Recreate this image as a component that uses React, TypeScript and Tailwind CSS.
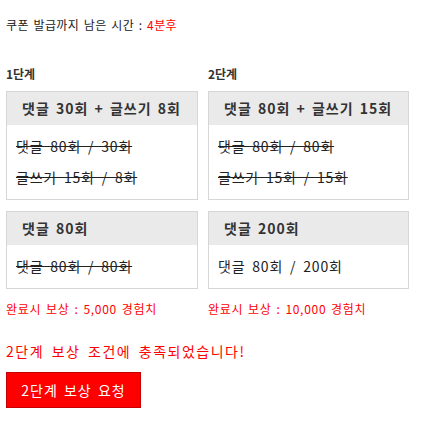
const font = { fontFamily: '"Noto Sans CJK KR", "Noto Sans", sans-serif' }

type Mission = {
  title: string
  lines: { text: string; done: boolean }[]
}

type Step = {
  label: string
  width: string
  missions: Mission[]
  reward: string
}

const steps: Step[] = [
  {
    label: '1단계',
    width: 'w-[192px]',
    missions: [
      {
        title: '댓글 30회 + 글쓰기 8회',
        lines: [
          { text: '댓글 80회 / 30회', done: true },
          { text: '글쓰기 15회 / 8회', done: true },
        ],
      },
      {
        title: '댓글 80회',
        lines: [{ text: '댓글 80회 / 80회', done: true }],
      },
    ],
    reward: '완료시 보상 : 5,000 경험치',
  },
  {
    label: '2단계',
    width: 'w-[201px]',
    missions: [
      {
        title: '댓글 80회 + 글쓰기 15회',
        lines: [
          { text: '댓글 80회 / 80회', done: true },
          { text: '글쓰기 15회 / 15회', done: true },
        ],
      },
      {
        title: '댓글 200회',
        lines: [{ text: '댓글 80회 / 200회', done: false }],
      },
    ],
    reward: '완료시 보상 : 10,000 경험치',
  },
]

function MissionBox({ mission }: { mission: Mission }) {
  return (
    <div className="border border-[#d6d6d6] bg-white">
      <div className="h-[33px] bg-[#eaeaea] pl-[15px] text-[14px] font-bold leading-[33px] tracking-[1px] [word-spacing:2px] text-[#333] whitespace-nowrap">
        {mission.title}
      </div>
      <div className="py-[6px] pl-[9px]">
        {mission.lines.map((line) => (
          <p
            key={line.text}
            className={`h-[31px] text-[14px] leading-[31px] tracking-[0.8px] [word-spacing:3px] text-[#222] whitespace-nowrap ${line.done ? 'line-through' : ''}`}
          >
            {line.text}
          </p>
        ))}
      </div>
    </div>
  )
}

export default function App() {
  return (
    <div className="min-h-[425px] bg-white px-[6px] pt-[16px]" style={font}>
      <p className="h-[18px] text-[12px] leading-[18px] tracking-[0.4px] [word-spacing:1.5px] text-[#222]">
        쿠폰 발급까지 남은 시간 : <span className="text-[#ff0000]">4분후</span>
      </p>

      <div className="mt-[31px] flex gap-[10px]">
        {steps.map((step) => (
          <div key={step.label} className={`flex flex-col ${step.width}`}>
            <h4 className="h-[18px] text-[12px] font-bold leading-[18px] text-[#333]">{step.label}</h4>
            <div className="mt-[8px] flex flex-col gap-[11px]">
              {step.missions.map((m) => (
                <MissionBox key={m.title} mission={m} />
              ))}
            </div>
            <p className="mt-[11px] h-[18px] text-[12px] leading-[18px] tracking-[0.7px] [word-spacing:1.5px] text-[#ff0000] whitespace-nowrap">
              {step.reward}
            </p>
          </div>
        ))}
      </div>

      <p className="mt-[23px] h-[20px] text-[14px] leading-[20px] tracking-[1.5px] [word-spacing:3px] text-[#ff0000]">
        2단계 보상 조건에 충족되었습니다!
      </p>
      <button className="mt-[11px] h-[36px] w-[135px] border border-[#c40000] bg-[#ff0000] text-[14px] tracking-[1px] [word-spacing:2px] text-white">
        2단계 보상 요청
      </button>
    </div>
  )
}
